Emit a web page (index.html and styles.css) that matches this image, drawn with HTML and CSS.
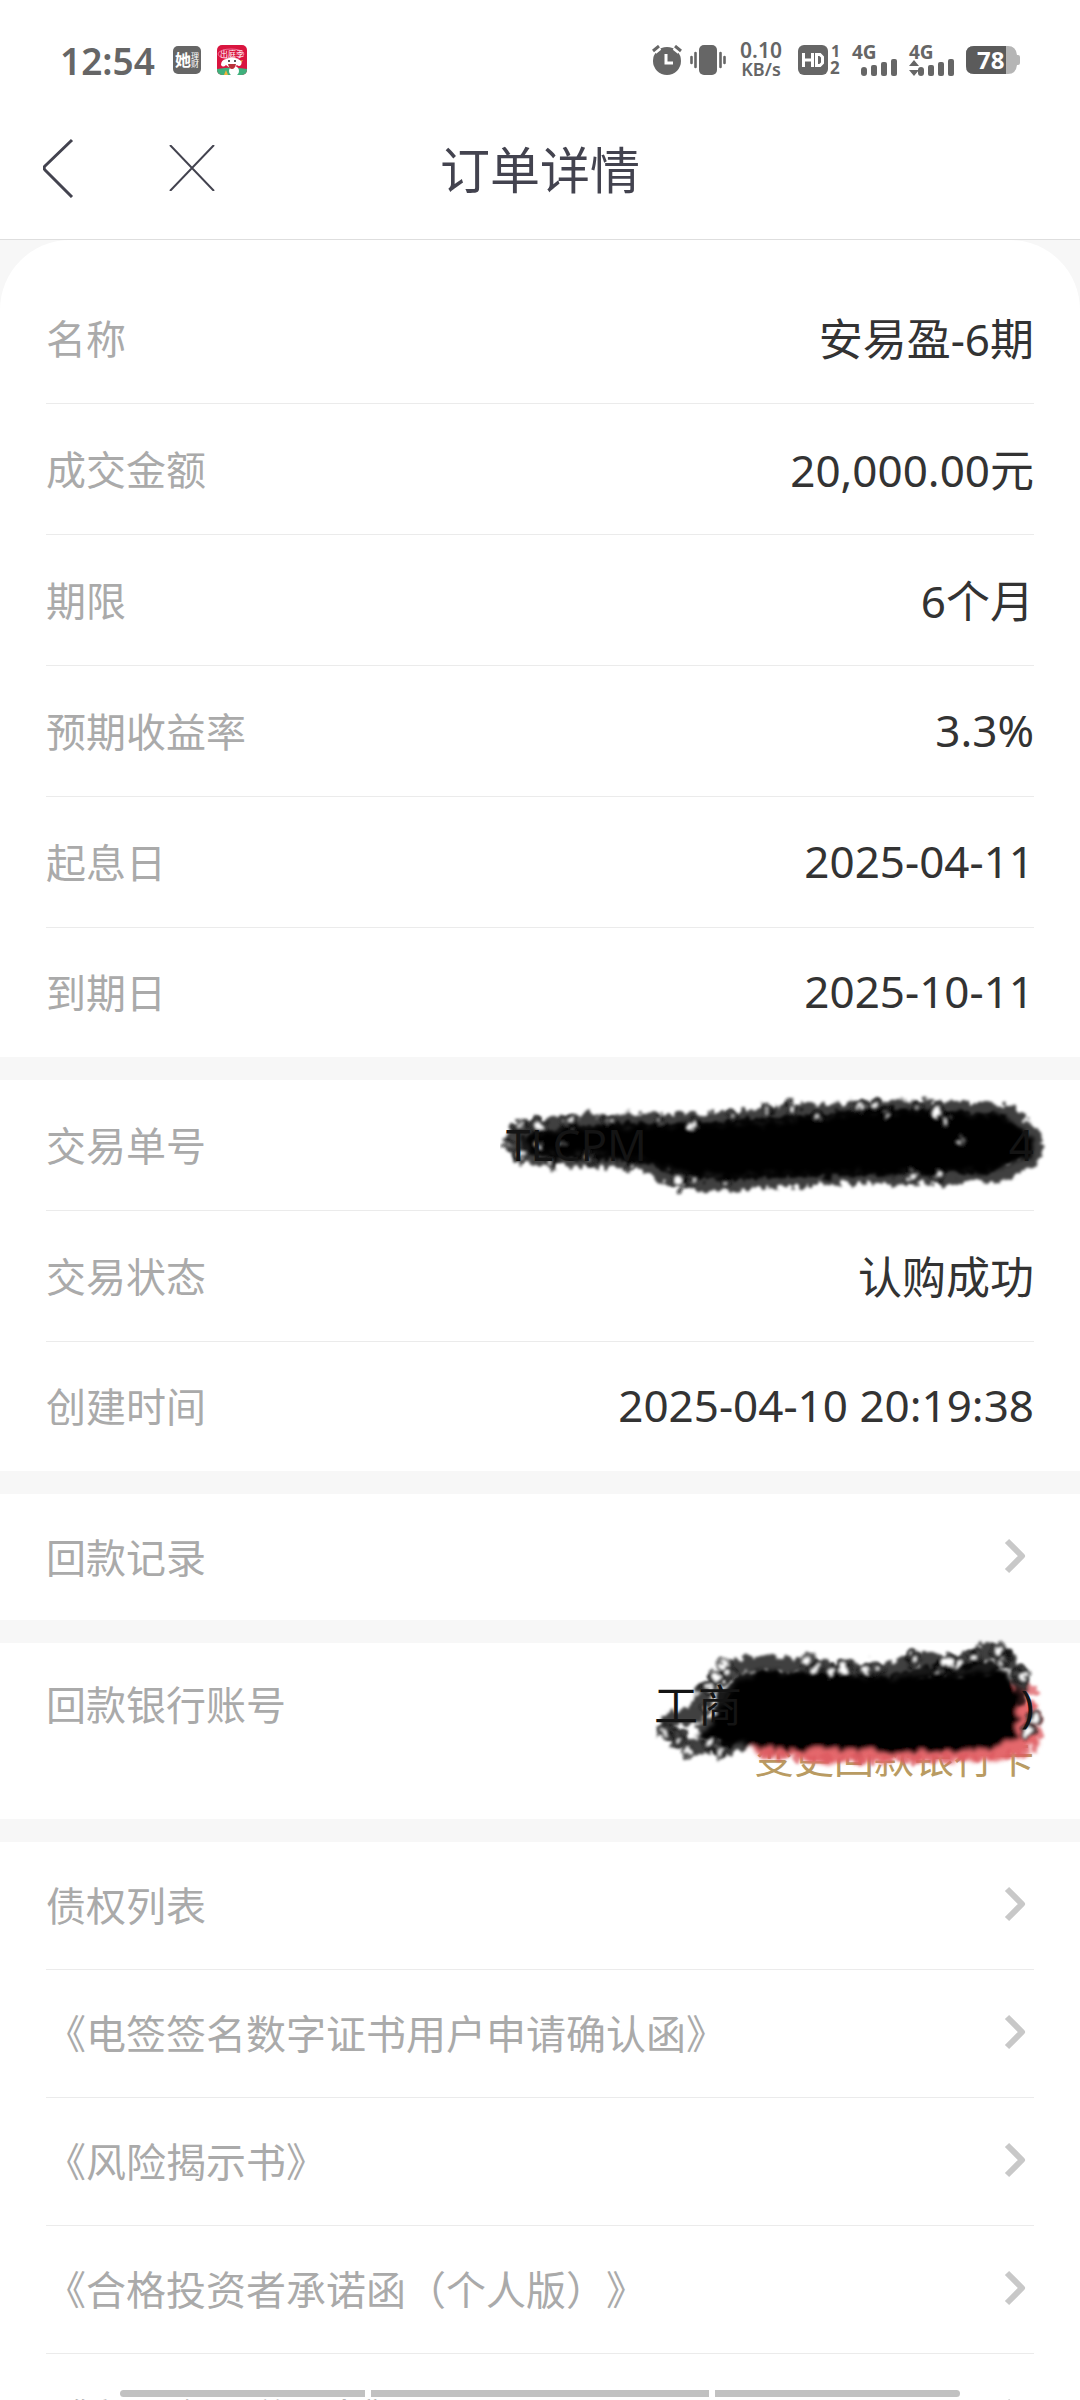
FILE: index.html
```html
<!DOCTYPE html>
<html lang="zh-CN">
<head>
  <meta charset="UTF-8">
  <meta name="viewport" content="width=device-width, initial-scale=1.0">
  <title>订单详情</title>
  <link rel="stylesheet" href="styles.css">
</head>
<body>
  <!-- shared shapes -->
  <svg class="defs" aria-hidden="true">
    <defs>
      <symbol id="chevron" viewBox="0 0 22 36">
        <path d="M3 3 L18 18 L3 33" fill="none" stroke="#c8c8c8" stroke-width="6" stroke-linejoin="round"/>
      </symbol>
      <symbol id="bars" viewBox="0 0 36 18">
        <rect x="0" y="9" width="6" height="9" rx="3"/>
        <rect x="10" y="7" width="6" height="11" rx="2"/>
        <rect x="20" y="4" width="6" height="14" rx="2"/>
        <rect x="30" y="1" width="6" height="17" rx="2"/>
      </symbol>
      <filter id="rough" x="-5%" y="-20%" width="110%" height="140%">
        <feTurbulence type="fractalNoise" baseFrequency="0.09" numOctaves="2" seed="4" result="n"/>
        <feDisplacementMap in="SourceGraphic" in2="n" scale="18" xChannelSelector="R" yChannelSelector="G"/>
        <feGaussianBlur stdDeviation="2"/>
      </filter>
      <filter id="soft" x="-10%" y="-20%" width="120%" height="140%">
        <feTurbulence type="fractalNoise" baseFrequency="0.12" numOctaves="2" seed="9" result="n"/>
        <feDisplacementMap in="SourceGraphic" in2="n" scale="14" xChannelSelector="R" yChannelSelector="G"/>
        <feGaussianBlur stdDeviation="1.6"/>
      </filter>
    </defs>
  </svg>

  <div class="page">
    <div class="status">
      <div class="status-left">
        <span class="time">12:54</span>
        <svg class="app-icon" width="28" height="28" viewBox="0 0 28 28">
          <rect width="28" height="28" rx="5" fill="#666"/>
          <text x="2" y="20" font-size="16" font-weight="700" fill="#fff">她</text>
          <text x="18" y="13" font-size="8" fill="#fff">理</text>
          <text x="18" y="21" font-size="8" fill="#fff">财</text>
        </svg>
        <svg class="app-icon" width="30" height="30" viewBox="0 0 30 30">
          <clipPath id="appclip"><rect width="30" height="30" rx="5"/></clipPath>
          <g clip-path="url(#appclip)">
            <rect width="30" height="30" fill="#d9153f"/>
            <path d="M0 24 Q15 21 30 24 V30 H0Z" fill="#3fb07c"/>
            <ellipse cx="14" cy="9" rx="13" ry="5" fill="none" stroke="#f06a94"/>
            <path d="M9 25 L7 30 H11Z" fill="#f3b43c"/>
            <path d="M22 16 L26 15 L23 20Z" fill="#f3b43c"/>
            <ellipse cx="17" cy="26" rx="5" ry="5" fill="#fff"/>
            <path d="M4 20 Q4 15 9 14 Q15 11 21 14 Q26 16 24 20 Q22 22 20 20 Q15 26 9 20 Q6 23 4 20Z" fill="#fff"/>
            <circle cx="12" cy="16" r="1" fill="#222"/>
            <circle cx="18" cy="16" r="1" fill="#222"/>
            <path d="M11 19 H19 Q18 24 15 24 Q12 24 11 19Z" fill="#b8323a"/>
          </g>
          <text x="3" y="12" font-size="8" fill="#fff">出庭季</text>
        </svg>
      </div>
      <div class="status-right">
        <svg width="30" height="30" viewBox="0 0 30 30">
          <circle cx="15" cy="16" r="14" fill="#666"/>
          <path d="M2 6 L7 2 M28 6 L23 2" stroke="#fff" stroke-width="7"/>
          <path d="M1 6 L7 1 M29 6 L23 1" stroke="#666" stroke-width="3"/>
          <path d="M14 9 V18 H21" fill="none" stroke="#fff" stroke-width="3"/>
        </svg>
        <svg class="vibrate" width="36" height="30" viewBox="0 0 36 30">
          <rect x="9" width="18" height="30" rx="5" fill="#666"/>
          <path d="M1.500 12 V18 M5.500 8 V22 M30.500 8 V22 M34.500 12 V18" stroke="#666" stroke-width="2.600" stroke-linecap="round"/>
        </svg>
        <span class="speed"><span>0.10</span><span class="unit">KB/s</span></span>
        <svg class="hd" width="42" height="30" viewBox="0 0 42 30">
          <rect width="30" height="30" rx="6" fill="#666"/>
          <path d="M5.500 8 V22 M14.500 8 V22 M5.500 15 H14.500" stroke="#fff" stroke-width="3"/>
          <path d="M18.500 9.500 H22 L24.500 12 V18 L22 20.500 H18.500Z" fill="none" stroke="#fff" stroke-width="3"/>
          <text x="33" y="12" font-size="16" font-weight="700" fill="#666">1</text>
          <text x="32" y="29" font-size="17" font-weight="700" fill="#666">2</text>
        </svg>
        <span class="signal">
          <span>4G</span>
          <svg class="signal-bars" width="36" height="18"><use href="#bars"/></svg>
        </span>
        <span class="signal">
          <span>4G</span>
          <svg class="signal-data" width="10" height="16" viewBox="0 0 10 16"><path d="M0 6 L5 0 L10 6Z M0 10 L5 16 L10 10Z"/></svg>
          <svg class="signal-bars" width="36" height="18"><use href="#bars"/></svg>
        </span>
        <svg class="battery" width="54" height="28" viewBox="0 0 54 28">
          <path d="M8 0 H42 Q50 0 51 9 H52 Q54 9 54 11 V17 Q54 19 52 19 H51 Q50 28 42 28 H8 Q0 28 0 20 V8 Q0 0 8 0Z" fill="#b5b5b5"/>
          <path d="M8 0 H40 V28 H8 Q0 28 0 20 V8 Q0 0 8 0Z" fill="#5b5b5b"/>
          <text x="11" y="23" font-size="24" font-weight="700" fill="#fff">78</text>
        </svg>
      </div>
    </div>

    <header class="header">
      <div class="header-buttons">
        <button type="button" aria-label="返回">
          <svg width="32" height="60" viewBox="0 0 32 60"><path d="M29 2 L2 28 Q0 30 2 32 L29 59" fill="none" stroke="#43434f" stroke-width="3"/></svg>
        </button>
        <button type="button" aria-label="关闭">
          <svg width="46" height="46" viewBox="0 0 46 46"><path d="M1 0 L45 46 M45 0 L1 46" stroke="#43434f" stroke-width="2"/></svg>
        </button>
      </div>
      <h1>订单详情</h1>
    </header>

    <main>
      <dl class="section first">
        <div class="row"><dt>名称</dt><dd>安易盈-6期</dd></div>
        <div class="row"><dt>成交金额</dt><dd>20,000.00元</dd></div>
        <div class="row"><dt>期限</dt><dd>6个月</dd></div>
        <div class="row"><dt>预期收益率</dt><dd>3.3%</dd></div>
        <div class="row"><dt>起息日</dt><dd>2025-04-11</dd></div>
        <div class="row"><dt>到期日</dt><dd>2025-10-11</dd></div>
      </dl>

      <dl class="section">
        <div class="row">
          <dt>交易单号</dt>
          <dd class="masked order-no">
            <svg class="scribble" width="560" height="110" viewBox="500 1090 560 110" aria-hidden="true">
              <g filter="url(#rough)">
                <path d="M530 1132 L600 1124 L680 1124 L740 1122 L800 1118 L870 1110 L950 1110 L1010 1116 L1034 1140 L1030 1158 L1000 1166 L930 1172 L860 1170 L780 1172 L710 1174 L670 1168 L640 1156 L560 1152 L530 1148Z"/>
              </g>
              <g filter="url(#soft)">
                <path class="beads" d="M514 1132 L545 1122 L600 1118 L680 1120 L740 1116 L800 1110 L870 1106 L950 1106 L1010 1110 L1036 1138 L1034 1156 L1004 1172 L930 1176 L860 1174 L780 1177 L710 1182 L670 1176 L640 1160 L560 1156 L516 1152Z"/>
                <path class="beads inner" d="M530 1140 L560 1134 L610 1130 L700 1128 L790 1122 L880 1114 L1000 1120 L1022 1142 L990 1162 L860 1166 L700 1170 L640 1152 L540 1148Z"/>
              </g>
              <g class="rings" filter="url(#soft)">
                <circle cx="520" cy="1124" r="5"/><circle cx="540" cy="1124" r="6"/><circle cx="521" cy="1153" r="5"/><circle cx="509" cy="1143" r="4"/>
                <circle cx="538" cy="1143" r="4"/><circle cx="570" cy="1120" r="5"/><circle cx="562" cy="1142" r="4"/><circle cx="589" cy="1155" r="4"/>
                <circle cx="552" cy="1160" r="4"/><circle cx="609" cy="1120" r="4"/><circle cx="632" cy="1164" r="4"/>
                <circle cx="660" cy="1120" r="4"/><circle cx="693" cy="1123" r="5"/><circle cx="680" cy="1180" r="7"/><circle cx="692" cy="1178" r="4"/>
                <circle cx="734" cy="1113" r="4"/><circle cx="768" cy="1108" r="4"/><circle cx="792" cy="1106" r="5"/>
                <circle cx="725" cy="1181" r="4"/><circle cx="817" cy="1115" r="4"/><circle cx="860" cy="1105" r="5"/><circle cx="872" cy="1104" r="5"/>
                <circle cx="886" cy="1111" r="4"/><circle cx="916" cy="1105" r="4"/><circle cx="937" cy="1111" r="6"/><circle cx="945" cy="1119" r="5"/>
                <circle cx="959" cy="1140" r="2"/><circle cx="960" cy="1140" r="4"/><circle cx="912" cy="1173" r="6"/><circle cx="938" cy="1173" r="5"/>
              </g>
            </svg>
            <span>TLCPM</span><span>4</span>
          </dd>
        </div>
        <div class="row"><dt>交易状态</dt><dd>认购成功</dd></div>
        <div class="row"><dt>创建时间</dt><dd>2025-04-10 20:19:38</dd></div>
      </dl>

      <div class="section">
        <a class="row link" href="#">回款记录<svg class="chevron"><use href="#chevron"/></svg></a>
      </div>

      <div class="section account">
        <div class="account-row">
          <span class="label">回款银行账号</span>
          <span class="masked bank"><span>工商</span><span>)</span></span>
        </div>
        <a class="change-card" href="#">变更回款银行卡</a>
        <svg class="scribble bank-scribble" width="420" height="150" viewBox="640 1630 420 150" aria-hidden="true">
          <g filter="url(#rough)">
            <path d="M722 1720 L760 1690 L1020 1684 L1034 1706 L1038 1738 L1026 1755 L960 1762 L850 1762 L760 1756Z" fill="#e4686c"/>
            <path d="M736 1684 L760 1670 L890 1678 L960 1672 L1006 1672 L1020 1694 L1018 1736 L990 1750 L880 1752 L790 1752 L740 1744 L700 1738 L720 1710Z"/>
          </g>
          <g filter="url(#soft)">
            <path class="beads" d="M672 1720 L700 1712 L706 1688 L730 1670 L750 1662 L820 1668 L890 1672 L915 1658 L960 1664 L990 1650 L1006 1656 L1022 1680 L1018 1700"/>
            <path class="beads" d="M668 1732 L690 1746 L740 1746 L736 1722 L704 1728"/>
            <path class="beads inner" d="M728 1740 L722 1700 L744 1680 L890 1684 L920 1674 L1000 1668"/>
            <path class="beads red-beads" d="M1032 1690 L1040 1742 L1026 1754 L970 1758 L850 1760 L760 1754"/>
          </g>
          <g class="rings" filter="url(#soft)">
            <circle cx="664" cy="1733" r="5"/><circle cx="680" cy="1737" r="5"/><circle cx="688" cy="1752" r="5"/>
            <circle cx="721" cy="1751" r="5"/><circle cx="711" cy="1743" r="6"/><circle cx="706" cy="1708" r="4"/>
            <circle cx="709" cy="1688" r="5"/><circle cx="717" cy="1677" r="6"/><circle cx="724" cy="1665" r="5"/><circle cx="729" cy="1673" r="5"/>
            <circle cx="808" cy="1661" r="6"/><circle cx="816" cy="1668" r="5"/>
            <circle cx="832" cy="1672" r="5"/><circle cx="843" cy="1669" r="7"/><circle cx="868" cy="1671" r="7"/><circle cx="876" cy="1669" r="5"/>
            <circle cx="914" cy="1660" r="6"/><circle cx="938" cy="1670" r="4"/><circle cx="948" cy="1662" r="7"/><circle cx="958" cy="1665" r="5"/>
            <circle cx="974" cy="1657" r="5"/><circle cx="1000" cy="1650" r="6"/><circle cx="1003" cy="1662" r="5"/>
            <circle cx="1022" cy="1675" r="7"/><circle cx="1028" cy="1732" r="6"/><circle cx="1034" cy="1719" r="5"/>
          </g>
        </svg>
      </div>

      <nav class="section">
        <a class="row link" href="#">债权列表<svg class="chevron"><use href="#chevron"/></svg></a>
        <a class="row link" href="#">《电签签名数字证书用户申请确认函》<svg class="chevron"><use href="#chevron"/></svg></a>
        <a class="row link" href="#">《风险揭示书》<svg class="chevron"><use href="#chevron"/></svg></a>
        <a class="row link" href="#">《合格投资者承诺函（个人版）》<svg class="chevron"><use href="#chevron"/></svg></a>
        <a class="row link" href="#">《产品合同说明书》<svg class="chevron"><use href="#chevron"/></svg></a>
      </nav>
    </main>

    <div class="gesture"><i></i><i></i><i></i></div>
  </div>
</body>
</html>
```

FILE: styles.css
```css
* {
  box-sizing: border-box;
}
body {
  margin: 0;
  background: #f7f7f7;
  color: #333;
  font-family: "Noto Sans", "Noto Sans CJK SC", sans-serif;
  font-size: 44px;
  text-spacing-trim: space-all;
}
.defs {
  display: block;
  width: 0;
  height: 0;
}
.page {
  position: relative;
  height: 100vh;
  overflow: hidden;
}

/* status bar */
.status {
  display: flex;
  justify-content: space-between;
  align-items: center;
  height: 120px;
  padding: 0 60px;
  background: #fff;
  color: #666;
}
.status-left,
.status-right {
  display: flex;
  align-items: center;
}
.time {
  font-size: 37px;
  font-weight: 600;
  margin-right: 18px;
}
.app-icon {
  margin-right: 16px;
  overflow: visible;
}
.vibrate {
  margin-left: 8px;
}
.speed {
  display: flex;
  flex-direction: column;
  width: 46px;
  margin: 0 14px 0 12px;
  text-align: center;
  font-size: 21px;
  line-height: 19px;
  font-weight: 600;
}
.speed .unit {
  font-size: 18px;
}
.hd {
  margin-right: 12px;
  overflow: visible;
}
.signal {
  position: relative;
  width: 45px;
  height: 32px;
  margin-right: 12px;
  font-size: 19px;
  line-height: 16px;
  font-weight: 700;
}
.signal svg {
  position: absolute;
  bottom: 0;
  fill: #666;
}
.signal-bars {
  right: 0;
}
.signal-data {
  left: 0;
}

/* title bar */
.header {
  position: relative;
  display: flex;
  justify-content: center;
  align-items: center;
  height: 120px;
  padding-bottom: 24px;
  background: #fff;
  border-bottom: 1px solid #dedede;
}
.header h1 {
  margin: 0;
  font-size: 50px;
  font-weight: 400;
  color: #43434f;
}
.header-buttons {
  position: absolute;
  left: 43px;
  top: 0;
  bottom: 24px;
  display: flex;
  align-items: center;
  gap: 94px;
}
.header button {
  padding: 0;
  border: 0;
  background: none;
}
.header button svg {
  display: block;
}

/* blocks */
.section {
  position: relative;
  margin: 0 0 23px;
  padding: 0 46px;
  background: #fff;
}
.first {
  padding-top: 33px;
  border-radius: 70px 70px 0 0;
}
.row {
  display: flex;
  justify-content: space-between;
  align-items: center;
  height: 131px;
  padding-bottom: 3px;
  border-bottom: 1px solid #ebebeb;
}
.row:last-child {
  height: 129px;
  border-bottom: 0;
}
dt,
.label {
  font-size: 40px;
  color: #aaa;
}
dd {
  margin: 0;
}
.row.link {
  height: 128px;
  font-size: 40px;
  color: #aaa;
  text-decoration: none;
}
.row.link:last-child {
  height: 126px;
}
.chevron {
  width: 22px;
  height: 36px;
  margin-right: 8px;
}

/* scribbled out values */
.masked {
  display: flex;
  justify-content: space-between;
}
.masked span {
  position: relative;
  z-index: 1;
  color: #141414;
}
.order-no {
  position: relative;
  width: 528px;
}
.bank {
  width: 380px;
}
.scribble {
  position: absolute;
  left: -6px;
  top: -22px;
}
.bank-scribble {
  left: auto;
  right: 20px;
  top: -13px;
}
.beads {
  fill: none;
  stroke: #000;
  stroke-width: 17;
  stroke-linecap: round;
  stroke-dasharray: 0 13;
  stroke-opacity: 0.75;
}
.inner {
  stroke-dasharray: 0 11;
  stroke-opacity: 0.9;
}
.red-beads {
  stroke: #dc5a60;
  stroke-width: 10;
  stroke-dasharray: 0 15;
}
.rings circle {
  fill: #fff;
  stroke: #000;
  stroke-width: 5;
  stroke-opacity: 0.7;
}
.account {
  padding-top: 34px;
  padding-bottom: 36px;
}
.account-row {
  display: flex;
  justify-content: space-between;
  line-height: 56px;
}
.change-card {
  display: block;
  font-size: 40px;
  line-height: 50px;
  text-align: right;
  color: #b99b62;
  text-decoration: none;
}

/* gesture bar */
.gesture {
  position: absolute;
  left: 120px;
  right: 120px;
  bottom: 3px;
  display: flex;
  gap: 6px;
  height: 7px;
  border-radius: 4px;
  overflow: hidden;
}
.gesture i {
  flex: 245;
  background: #c1c1c1;
}
.gesture i:nth-child(2) {
  flex: 338;
}
```
